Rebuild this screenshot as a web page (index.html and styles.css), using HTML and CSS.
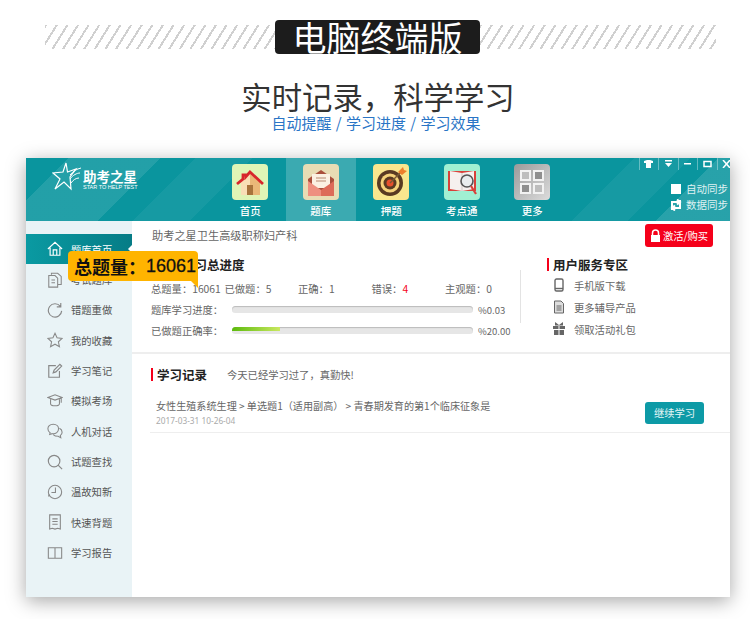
FILE: index.html
```html
<!DOCTYPE html>
<html lang="zh-CN">
<head>
    <meta charset="UTF-8">
    <meta name="viewport" content="width=device-width, initial-scale=1.0">
    <title>电脑终端版</title>
    <link rel="stylesheet" href="styles.css">
</head>
<body>
    <div class="banner">
        <div class="stripes"></div>
        <div class="banner-title">电脑终端版</div>
        <div class="stripes"></div>
    </div>

    <div class="intro">
        <h1>实时记录，科学学习</h1>
        <p>自动提醒 / 学习进度 / 学习效果</p>
    </div>

    <div class="window">
        <div class="topbar">
            <div class="logo">
                <svg width="30" height="30" viewBox="0 0 30 30" fill="none" stroke="#fff" stroke-width="1.2">
                    <path d="M14 1 L15.500 10 L24 7 L18 15 L19 27 L12 20 L3 27 L8 17 L1 11 L11 10 Z"/>
                    <path d="M18 13 C21 9 25 7 29 6 M18 17 C21 13 25 11 28 11 M19 21 C21 18 24 16 27 16" stroke-width="1"/>
                </svg>
                <div class="logo-text">
                    <div class="logo-name">助考之星</div>
                    <div class="logo-sub">STAR TO HELP TEST</div>
                </div>
            </div>

            <div class="tabs">
                <div class="tab">
                    <span class="tab-icon icon-home">
                        <svg width="36" height="36" viewBox="0 0 36 36">
                            <path d="M9 18 L18 10 L28 18 V31 H9 Z" fill="#f9dfb6"/>
                            <path d="M18 10 L28 18 V31 H18 Z" fill="#eab878"/>
                            <path d="M15 21 H21 V31 H15 Z" fill="#a8743c"/>
                            <path d="M5 20 L11 15 V11 H14 V12.500 L18 8 L31 20" fill="none" stroke="#d8262c" stroke-width="2.800"/>
                        </svg>
                    </span>
                    <span>首页</span>
                </div>
                <div class="tab tab-active">
                    <span class="tab-icon icon-mail">
                        <svg width="36" height="36" viewBox="0 0 36 36">
                            <path d="M5 15 L18 6 L31 15 V31 H5 Z" fill="#a94f3c"/>
                            <path d="M9 10 H27 V24 H9 Z" fill="#fbf0e2"/>
                            <path d="M13 14 H23 M13 17 H23" stroke="#b78a72" stroke-width="1.2"/>
                            <path d="M5 17 L18 26 V32 H5 Z" fill="#ee8f7f"/>
                            <path d="M31 17 L18 26 V32 H31 Z" fill="#dd6a58"/>
                        </svg>
                    </span>
                    <span>题库</span>
                </div>
                <div class="tab">
                    <span class="tab-icon icon-target">
                        <svg width="36" height="36" viewBox="0 0 36 36">
                            <circle cx="17" cy="19" r="13" fill="#5a3a22"/>
                            <circle cx="17" cy="19" r="9.500" fill="#f6d27a"/>
                            <circle cx="17" cy="19" r="6.500" fill="#5a3a22"/>
                            <circle cx="17" cy="19" r="3.500" fill="#e8502c"/>
                            <path d="M17 19 L29 7" stroke="#7a5a34" stroke-width="1.4"/>
                            <path d="M25 8 L30 3 L31 6 L34 7 L29 11 Z" fill="#ee7f2c"/>
                        </svg>
                    </span>
                    <span>押题</span>
                </div>
                <div class="tab">
                    <span class="tab-icon icon-book">
                        <svg width="36" height="36" viewBox="0 0 36 36">
                            <path d="M4 7 H32 V27 H4 Z" fill="#d8423a"/>
                            <path d="M6 7 L18 9 L30 7 V25 L18 27 L6 25 Z" fill="#f5f0ee"/>
                            <path d="M18 9 V27" stroke="#cfc8c4"/>
                            <circle cx="23" cy="17" r="6" fill="#e9edee" stroke="#555" stroke-width="1.6"/>
                            <path d="M27 22 L32 30" stroke="#d8423a" stroke-width="2.2"/>
                        </svg>
                    </span>
                    <span>考点通</span>
                </div>
                <div class="tab">
                    <span class="tab-icon icon-more">
                        <svg width="36" height="36" viewBox="0 0 36 36" fill="#bdbdbd" stroke="#f2f2f2" stroke-width="2">
                            <rect x="7" y="7" width="9" height="9"/>
                            <rect x="20" y="7" width="9" height="9" fill="#8f8f8f"/>
                            <rect x="7" y="20" width="9" height="9" fill="#8f8f8f"/>
                            <rect x="20" y="20" width="9" height="9"/>
                        </svg>
                    </span>
                    <span>更多</span>
                </div>
            </div>

            <div class="topbar-right">
                <div class="win-controls">
                    <span class="win-btn">
                        <svg width="9" height="8" viewBox="0 0 9 8" fill="#fff"><path d="M0 1 L3 0 H6 L9 1 V3 H7 V8 H2 V3 H0 Z"/></svg>
                    </span>
                    <span class="win-btn">
                        <svg width="9" height="8" viewBox="0 0 9 8" fill="#fff"><path d="M1 0 H8 V1.500 H1 Z M1 3 H8 L4.500 7 Z"/></svg>
                    </span>
                    <span class="win-btn">
                        <svg width="9" height="8" viewBox="0 0 9 8" fill="#fff"><path d="M1 3 H8 V4.500 H1 Z"/></svg>
                    </span>
                    <span class="win-btn">
                        <svg width="9" height="8" viewBox="0 0 9 8" fill="none" stroke="#fff" stroke-width="1.500"><rect x="1" y="1.500" width="7" height="5"/></svg>
                    </span>
                    <span class="win-btn">
                        <svg width="9" height="8" viewBox="0 0 9 8" fill="none" stroke="#fff" stroke-width="1.500"><path d="M1 0 L8 8 M8 0 L1 8"/></svg>
                    </span>
                </div>
                <div class="sync">
                    <div class="sync-row"><span class="checkbox"></span>自动同步</div>
                    <div class="sync-row">
                        <svg class="sync-icon" width="14" height="12" viewBox="0 0 14 12" fill="none" stroke="#fff" stroke-width="2">
                            <path d="M3 11 V3 H10 M8 0.500 L11 3 L8 5.500" />
                            <path d="M11 1 V9 H4 M6 6.500 L3 9 L6 11.500" />
                        </svg>
                        数据同步
                    </div>
                </div>
            </div>
        </div>

        <div class="body">
            <div class="sidebar">
                <div class="nav-item nav-active">
                    <svg class="nav-icon" viewBox="0 0 18 18" fill="none" stroke="#fff" stroke-width="1.300"><path d="M1 9 L9 1.500 L17 9 M3.500 7.500 V16 H14.500 V7.500 M7 16 V10 H11 V16"/></svg>
                    题库首页
                </div>
                <div class="nav-item">
                    <svg class="nav-icon" viewBox="0 0 18 18" fill="none" stroke="#888" stroke-width="1.200"><path d="M5 3 V1.500 H12 L16 5 V14 H12 M2 4 H9 L12 7 V17 H2 Z M5 9 H9 M5 12 H9"/></svg>
                    考试题库
                </div>
                <div class="nav-item">
                    <svg class="nav-icon" viewBox="0 0 18 18" fill="none" stroke="#888" stroke-width="1.300"><path d="M15 5 A7.500 7.500 0 1 0 16.500 10 M15.500 1 V5.500 H11"/></svg>
                    错题重做
                </div>
                <div class="nav-item">
                    <svg class="nav-icon" viewBox="0 0 18 18" fill="none" stroke="#888" stroke-width="1.200"><path d="M9 1.500 L11.300 6.500 L17 7.200 L12.800 11 L14 16.500 L9 13.700 L4 16.500 L5.200 11 L1 7.200 L6.700 6.500 Z"/></svg>
                    我的收藏
                </div>
                <div class="nav-item">
                    <svg class="nav-icon" viewBox="0 0 18 18" fill="none" stroke="#888" stroke-width="1.300"><path d="M14 9 V16 H2 V3 H10 M7 11 L8 8 L14.500 1.500 L16.500 3.500 L10 10 Z"/></svg>
                    学习笔记
                </div>
                <div class="nav-item">
                    <svg class="nav-icon" viewBox="0 0 18 18" fill="none" stroke="#888" stroke-width="1.200"><path d="M1 5 L9 2 L17 5 L9 8 Z M4 7 V12 C4 15 14 15 14 12 V7 M16 6 V11"/></svg>
                    模拟考场
                </div>
                <div class="nav-item">
                    <svg class="nav-icon" viewBox="0 0 18 18" fill="none" stroke="#888" stroke-width="1.200"><path d="M7 1.500 C3 1.500 1 4 1 6.500 C1 8.500 2 10 3.500 11 L3 13 L6 12 C10 12.500 13 10 13 6.500 C13 4 11 1.500 7 1.500 Z M14 6 C16 7 17 9 17 10.500 C17 12.500 16 13.500 15 14 L15.500 16.500 L12.500 15 C10 15 8 14 7 13"/></svg>
                    人机对话
                </div>
                <div class="nav-item">
                    <svg class="nav-icon" viewBox="0 0 18 18" fill="none" stroke="#888" stroke-width="1.300"><circle cx="8" cy="8" r="6.500"/><path d="M12.500 12.500 L17 17"/></svg>
                    试题查找
                </div>
                <div class="nav-item">
                    <svg class="nav-icon" viewBox="0 0 18 18" fill="none" stroke="#888" stroke-width="1.200"><circle cx="9" cy="9" r="7.500"/><path d="M9.500 4 V9.500 H5 M3 12 L1.500 14"/></svg>
                    温故知新
                </div>
                <div class="nav-item">
                    <svg class="nav-icon" viewBox="0 0 18 18" fill="none" stroke="#888" stroke-width="1.200"><path d="M3 1 H15 V17 L12 16 L9 17 L6 16 L3 17 Z M6 5.500 H12 M6 8.500 H12 M6 11.500 H12"/></svg>
                    快速背题
                </div>
                <div class="nav-item">
                    <svg class="nav-icon" viewBox="0 0 18 18" fill="none" stroke="#888" stroke-width="1.200"><path d="M1.500 3 H16.500 V15 H1.500 Z M9 3 V15"/></svg>
                    学习报告
                </div>
            </div>

            <div class="main">
                <div class="crumb-row">
                    <span class="crumb">助考之星卫生高级职称妇产科</span>
                    <span class="buy-btn">
                        <svg width="11" height="13" viewBox="0 0 11 13"><path d="M2.500 6 V4 A3 3 0 0 1 8.500 4 V6" fill="none" stroke="#fff" stroke-width="1.500"/><rect x="1" y="6" width="9" height="7" fill="#fff"/></svg>
                        激活/购买
                    </span>
                </div>

                <div class="overview">
                    <div class="progress-panel">
                        <h2 class="section-title">题库学习总进度</h2>
                        <div class="stats">
                            <span>总题量：16061</span>
                            <span>已做题：5</span>
                            <span>正确：1</span>
                            <span>错误：<em>4</em></span>
                            <span>主观题：0</span>
                        </div>
                        <div class="progress-row">
                            <span class="progress-label">题库学习进度：</span>
                            <span class="bar"><span class="bar-fill" style="width: 0.03%"></span></span>
                            <span class="progress-value">%0.03</span>
                        </div>
                        <div class="progress-row">
                            <span class="progress-label">已做题正确率：</span>
                            <span class="bar"><span class="bar-fill" style="width: 20%"></span></span>
                            <span class="progress-value">%20.00</span>
                        </div>
                    </div>

                    <div class="service">
                        <h2 class="section-title">用户服务专区</h2>
                        <div class="service-item">
                            <svg width="12" height="14" viewBox="0 0 12 14" fill="none" stroke="#666" stroke-width="1.400"><rect x="2" y="1" width="8" height="12" rx="1.500"/><path d="M2 10.500 H10"/></svg>
                            手机版下载
                        </div>
                        <div class="service-item">
                            <svg width="12" height="14" viewBox="0 0 12 14" fill="#ddd" stroke="#666"><path d="M1.500 1 H8 L10.500 3.500 V13 H1.500 Z"/><path d="M3.500 6 H8.500 M3.500 8 H8.500 M3.500 10 H8.500" fill="none"/></svg>
                            更多辅导产品
                        </div>
                        <div class="service-item">
                            <svg width="12" height="14" viewBox="0 0 12 14" fill="#666"><path d="M0 4 H5.500 V7 H0 Z M6.500 4 H12 V7 H6.500 Z M1 8 H5.500 V13 H1 Z M6.500 8 H11 V13 H6.500 Z M2 0 L6 3 L10 0 L10 3.500 H2 Z"/></svg>
                            领取活动礼包
                        </div>
                    </div>
                </div>

                <div class="records">
                    <div class="records-head">
                        <h2 class="section-title">学习记录</h2>
                        <span class="records-note">今天已经学习过了，真勤快!</span>
                    </div>
                    <div class="record">
                        <div>
                            <div class="record-path">女性生殖系统生理 &gt; 单选题1（适用副高） &gt; 青春期发育的第1个临床征象是</div>
                            <div class="record-date">2017-03-31 10-26-04</div>
                        </div>
                        <span class="continue-btn">继续学习</span>
                    </div>
                </div>
            </div>

            <div class="total-tip">
                <span>总题量：</span>
                <span class="total-num">16061</span>
            </div>
        </div>
    </div>
</body>
</html>
```

FILE: styles.css
```css
body {
    margin: 0;
    padding-bottom: 22px;
    background: #fff;
    color: #333;
    font-family: "Noto Sans CJK SC", sans-serif;
}
.banner {
    display: flex;
    align-items: center;
    margin: 20px 34px 0 45px;
}
.stripes {
    width: 230px;
    flex-grow: 1;
    height: 24px;
    background: repeating-linear-gradient(122deg, #d0d0d0 0, #d0d0d0 2px, #fff 2px, #fff 9px);
}
.banner-title {
    width: 205px;
    height: 34px;
    line-height: 33px;
    background: #1c1c1c;
    border-radius: 4px;
    color: #fff;
    font-size: 34px;
    text-align: center;
}
.banner .stripes:first-child {
    flex-grow: 0;
}
.intro {
    padding-left: 6px;
    text-align: center;
}
.intro h1 {
    margin: 24px 0 0;
    font-size: 30.400px;
    line-height: 36px;
    font-weight: 400;
    color: #333;
}
.intro p {
    margin: 0;
    padding-right: 4px;
    font-size: 15px;
    word-spacing: 1px;
    line-height: 18px;
    color: #2a75c6;
}
.window {
    margin: 26px 0 0 26px;
    width: 704px;
    height: 439px;
    background: #fff;
    box-shadow: 0 4px 18px rgba(0, 0, 0, 0.35);
    display: flex;
    flex-direction: column;
}
.topbar {
    height: 63px;
    display: flex;
    overflow: hidden;
    color: #fff;
    background:
        linear-gradient(135deg,
            transparent 30px, rgba(255,255,255,0.1) 30px,
            rgba(255,255,255,0.1) 95px, transparent 95px,
            transparent 120px, rgba(255,255,255,0.05) 120px,
            rgba(255,255,255,0.05) 160px, transparent 160px,
            transparent 430px, rgba(255,255,255,0.05) 430px,
            rgba(255,255,255,0.05) 470px, transparent 470px,
            transparent 490px, rgba(255,255,255,0.12) 490px),
        #0a959e;
}
.logo {
    width: 189px;
    box-sizing: border-box;
    padding: 4px 0 0 26px;
    display: flex;
    align-items: flex-start;
    gap: 1px;
}
.logo-text {
    padding-top: 7px;
}
.logo-name {
    font-size: 13.500px;
    line-height: 15px;
    font-weight: 700;
}
.logo-sub {
    font-family: "Liberation Sans", sans-serif;
    font-size: 5.500px;
    line-height: 7px;
    white-space: nowrap;
}
.tabs {
    display: flex;
}
.tab {
    width: 70.500px;
    padding-top: 6px;
    box-sizing: border-box;
    display: flex;
    flex-direction: column;
    align-items: center;
    gap: 4px;
    font-size: 10.500px;
    line-height: 14px;
    font-weight: 500;
}
.tab-active {
    background: rgba(255, 255, 255, 0.2);
}
.tab-icon {
    width: 36px;
    height: 36px;
    border-radius: 4px;
    display: block;
}
.tab-icon svg {
    display: block;
}
.icon-home { background: #dff5b6; }
.icon-mail { background: #e8dcb4; }
.icon-target { background: #f9e68e; }
.icon-book { background: #a0f0d2; }
.icon-more { background: linear-gradient(135deg, #9a9a9a, #dcdcdc); }
.topbar-right {
    flex: 1;
    display: flex;
    flex-direction: column;
    align-items: flex-end;
}
.win-controls {
    display: flex;
    height: 12px;
    margin-right: -6px;
}
.win-btn {
    width: 19.500px;
    border-left: 1px solid rgba(255, 255, 255, 0.35);
    box-sizing: border-box;
    display: flex;
    align-items: center;
    justify-content: center;
}
.sync {
    margin: 11px 2px 0 0;
    font-size: 10.500px;
    line-height: 16px;
    color: #dff1f2;
}
.sync-row {
    display: flex;
    align-items: center;
    justify-content: flex-end;
    gap: 2px;
}
.sync-icon {
    margin-right: 1px;
}
.checkbox {
    width: 10px;
    height: 10px;
    margin-right: 3px;
    background: #fff;
}
.body {
    flex: 1;
    display: flex;
    position: relative;
}
.sidebar {
    width: 106px;
    box-sizing: border-box;
    padding-top: 13px;
    background: #e9f3f6;
}
.nav-item {
    height: 30.350px;
    box-sizing: border-box;
    padding-left: 21px;
    display: flex;
    align-items: center;
    gap: 8px;
    font-size: 10.300px;
    color: #555;
}
.nav-icon {
    width: 16px;
    height: 16px;
}
.nav-active {
    background: linear-gradient(to right, #0a9aa2, #067c86);
    color: #fff;
    position: relative;
}
.nav-active::after {
    content: "";
    position: absolute;
    right: 0;
    top: 11px;
    border: 4px solid transparent;
    border-right-color: #fff;
}
.main {
    flex: 1;
    min-width: 0;
}
.crumb-row {
    height: 30px;
    padding: 3px 17px 0 20px;
    box-sizing: border-box;
    display: flex;
    justify-content: space-between;
    align-items: flex-start;
}
.crumb {
    margin-top: 3px;
    font-size: 11.200px;
    line-height: 16px;
    color: #666;
}
.buy-btn {
    width: 68px;
    height: 23px;
    border-radius: 3px;
    background: #f5001a;
    color: #fff;
    font-size: 10.300px;
    display: flex;
    align-items: center;
    justify-content: center;
    gap: 2px;
}
.overview {
    height: 103px;
    box-sizing: border-box;
    border-bottom: 2px solid #eee;
    padding: 7px 0 0 19px;
    display: flex;
}
.section-title {
    margin: 0;
    padding-left: 4px;
    border-left: 2px solid #f5001a;
    font-size: 12.500px;
    line-height: 13px;
    font-weight: 700;
    color: #222;
}
.progress-panel {
    width: 369px;
}
.stats {
    display: flex;
    margin: 10px 0 2px;
    font-size: 10.300px;
    line-height: 16px;
    color: #666;
}
.stats span {
    width: 73.500px;
    white-space: nowrap;
}
.stats em {
    color: #f5001a;
    font-style: normal;
}
.progress-row {
    display: flex;
    align-items: center;
    height: 21px;
    font-size: 10.300px;
    color: #666;
    white-space: nowrap;
}
.progress-label {
    width: 81px;
}
.bar {
    width: 241px;
    height: 7px;
    border-radius: 4px;
    background: #e6e6e6;
    box-shadow: inset 0 1px 1px #bbb;
    overflow: hidden;
}
.bar-fill {
    display: block;
    height: 4px;
    background: linear-gradient(to right, #5cba0c, #c9e860);
}
.progress-value {
    margin-left: 5px;
    font-size: 9.500px;
}
.service {
    position: relative;
    margin-left: 27px;
}
.service::before {
    content: "";
    position: absolute;
    left: -27px;
    top: 12px;
    height: 53px;
    border-left: 1px solid #e3e3e3;
}
.service-item {
    display: flex;
    align-items: center;
    gap: 9px;
    height: 22px;
    padding-left: 6px;
    font-size: 10.300px;
    color: #666;
}
.service .section-title + .service-item {
    margin-top: 3px;
}
.records {
    padding-top: 13px;
}
.records-head {
    display: flex;
    align-items: center;
    gap: 20px;
    padding-left: 19px;
}
.records-note {
    font-size: 10.300px;
    color: #666;
}
.record {
    margin: 15px 0 0 18px;
    padding: 0 26px 4px 6px;
    height: 31px;
    border-bottom: 1px solid #eee;
    display: flex;
    justify-content: space-between;
    align-items: center;
}
.record-path {
    font-size: 10.100px;
    line-height: 16px;
    color: #666;
}
.record-date {
    font-family: "Noto Sans", sans-serif;
    font-size: 8.300px;
    line-height: 13px;
    color: #aaa;
}
.continue-btn {
    width: 59px;
    height: 22px;
    line-height: 22px;
    border-radius: 3px;
    background: #0d9aa6;
    color: #e6f6f6;
    font-size: 10.300px;
    text-align: center;
}
.total-tip {
    position: absolute;
    left: 42px;
    top: 30px;
    width: 130px;
    height: 30px;
    box-sizing: border-box;
    padding-left: 6px;
    background: #ffb400;
    border-radius: 4px 4px 0 4px;
    color: #111;
    display: flex;
    align-items: center;
    font-size: 18px;
    font-weight: 700;
}
.total-tip::after {
    content: "";
    position: absolute;
    right: 0;
    top: 30px;
    border-top: 7px solid #ffb400;
    border-left: 7px solid transparent;
}
.total-num {
    font-family: "Liberation Sans", sans-serif;
    font-size: 18px;
    font-weight: 400;
    -webkit-text-stroke: 0.3px #111;
}
```
